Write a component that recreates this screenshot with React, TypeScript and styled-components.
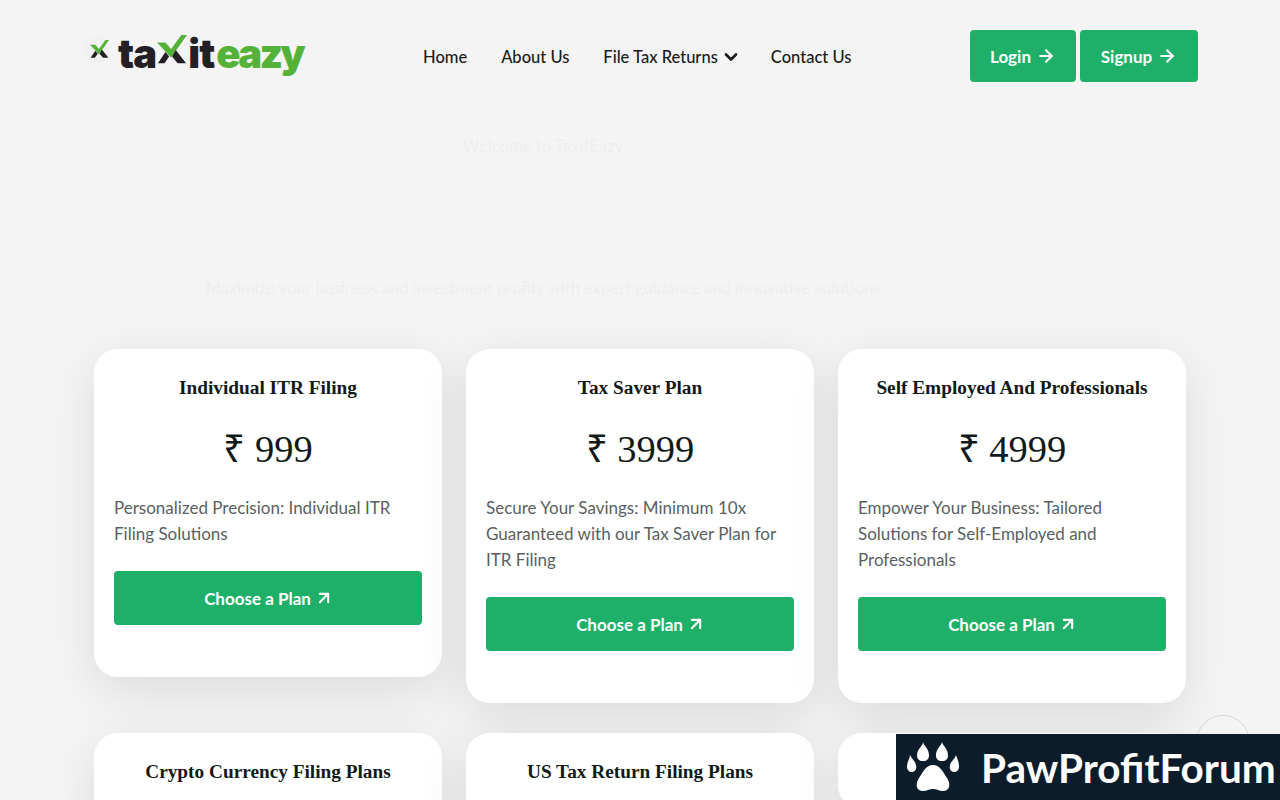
import React from 'react';
import styled, { createGlobalStyle } from 'styled-components';
import { ArrowRight, ArrowUpRight, ChevronDown } from 'lucide-react';

const GlobalStyle = createGlobalStyle`
  html, body {
    margin: 0;
    height: 100%;
    overflow: hidden;
    background: #f4f4f4;
  }
  * { box-sizing: border-box; }
`;

const Page = styled.div`
  height: 800px;
  overflow: hidden;
  font-family: 'Lato', 'Open Sans', sans-serif;
`;

const Header = styled.header`
  height: 112px;
  padding: 30px 82px 0 82px;
  display: flex;
  align-items: flex-start;
`;

const Logo = styled.a`
  width: 341px;
  height: 52px;
  padding-bottom: 5px;
  display: flex;
  align-items: center;
`;

const LogoBadge = styled.span`
  width: 27px;
  height: 27px;
  margin: 0 8px 9px 1px;
  padding-left: 5px;
  border-radius: 50%;
  background: #f0f0f0;
  display: flex;
  align-items: center;
  justify-content: center;
`;

const LogoText = styled.span`
  display: flex;
  align-items: center;
  font-family: 'Inter', 'Lato', sans-serif;
  font-weight: 900;
  font-size: 40px;
  letter-spacing: -0.9px;
  line-height: 46px;
  color: #231f25;
`;

const LogoMark = styled.span`
  display: flex;
  margin: 0 1px 7px;
`;

const LogoGreen = styled.span`
  margin-left: 2px;
  letter-spacing: -2.7px;
  color: #53b237;
`;

const Nav = styled.nav`
  width: 547px;
  height: 52px;
  display: flex;
  align-items: center;
  gap: 34px;
  padding-top: 2px;
`;

const NavLink = styled.a`
  display: flex;
  align-items: center;
  gap: 4px;
  font-size: 16.5px;
  font-weight: 500;
  color: #1a1a1a;
`;

const NavChevron = styled(ChevronDown)`
  margin: 0 -4px 0 -1px;
`;

const Actions = styled.div`
  display: flex;
  gap: 4px;
`;

const HeaderButton = styled.a<{ $width: number }>`
  width: ${(p) => p.$width}px;
  height: 52px;
  background: #1eb068;
  border-radius: 4px;
  color: #fff;
  font-size: 17px;
  font-weight: 700;
  display: flex;
  align-items: center;
  justify-content: center;
  gap: 5px;
`;

const Hero = styled.section`
  width: 1086px;
  height: 237px;
  text-align: center;
  color: #eeeeee;
`;

const HeroEyebrow = styled.div`
  font-size: 16.7px;
  line-height: 24px;
  padding-top: 22px;
  height: 164px;
`;

const HeroText = styled.div`
  font-size: 16.55px;
  line-height: 24px;
`;

const PlanGrid = styled.div`
  width: 1092px;
  margin-left: 94px;
  display: grid;
  grid-template-columns: repeat(3, 348px);
  column-gap: 24px;
  row-gap: 30px;
  align-items: start;
`;

const Card = styled.article`
  background: #fff;
  border-radius: 24px;
  padding: 24px 20px 52px;
  box-shadow: 0 14px 50px rgba(0, 0, 0, 0.1);
  text-align: center;
`;

const CardTitle = styled.h3`
  margin: 0;
  font-family: 'Liberation Serif', serif;
  font-size: 19.3px;
  line-height: 30px;
  font-weight: 700;
  color: #111a18;
`;

const Price = styled.div`
  margin-top: 21px;
  font-family: 'Liberation Serif', serif;
  font-size: 38.5px;
  line-height: 50px;
  color: #111a18;
`;

const Description = styled.p`
  margin: 21px 0 0;
  text-align: left;
  font-size: 17px;
  line-height: 26px;
  color: #5a5f63;
`;

const PlanButton = styled.a`
  margin-top: 24px;
  height: 54px;
  background: #1eb068;
  border-radius: 4px;
  color: #fff;
  font-size: 17px;
  font-weight: 700;
  display: flex;
  align-items: center;
  justify-content: center;
  gap: 3px;
`;

const PlanArrow = styled(ArrowUpRight)`
  margin-right: -2px;
`;

const ScrollTop = styled.div`
  position: fixed;
  left: 1196px;
  top: 715px;
  width: 54px;
  height: 54px;
  border-radius: 50%;
  border: 1px solid #d5d5d5;
`;

const Watermark = styled.div`
  position: fixed;
  left: 896px;
  top: 734px;
  width: 384px;
  height: 66px;
  background: #0d1c2b;
  display: flex;
  align-items: center;
  padding-left: 10px;
  gap: 21px;
`;

const WatermarkText = styled.span`
  font-family: 'Lato', sans-serif;
  font-weight: 700;
  font-size: 40.5px;
  color: #fff;
`;

const LogoX = ({ size }: { size: number }) => (
  <svg width={size} height={size} viewBox="0 0 32 32">
    <path d="M0 8 L9 8 L15 15 L26 0 L32 0 L15 24 Z" fill="#53b237" />
    <path d="M9 18 L13 23 L8 30 L1 30 Z" fill="#231f25" />
    <path d="M20 16 L31 30 L22 30 L16 23 Z" fill="#231f25" />
  </svg>
);

const PawIcon = () => (
  <svg width="54" height="52" viewBox="0 0 54 52" fill="#fff">
    <path d="M4 14 C4 17 1 21 1 25 C1 29 3 31 6 31 C9 31 11 28 10 24 C9 20 6 18 4 14 Z" />
    <path d="M17 1 C17 5 11 8 11 14 C11 18 13 20 17 20 C21 20 23 18 23 14 C23 8 18 5 17 1 Z" />
    <path d="M36 1 C35 5 30 8 30 14 C30 18 32 20 36 20 C40 20 42 18 42 14 C42 8 37 5 36 1 Z" />
    <path d="M50 14 C49 18 45 20 44 24 C43 28 45 31 48 31 C51 31 53 29 53 25 C53 21 51 17 50 14 Z" />
    <path d="M27 24 C34 24 37 31 41 37 C45 43 44 50 37 50 C33 50 31 48 27 48 C23 48 21 50 17 50 C10 50 9 43 13 37 C17 31 20 24 27 24 Z" />
  </svg>
);

const plans = [
  {
    title: 'Individual ITR Filing',
    price: '₹ 999',
    text: 'Personalized Precision: Individual ITR Filing Solutions',
  },
  {
    title: 'Tax Saver Plan',
    price: '₹ 3999',
    text: 'Secure Your Savings: Minimum 10x Guaranteed with our Tax Saver Plan for ITR Filing',
  },
  {
    title: 'Self Employed And Professionals',
    price: '₹ 4999',
    text: 'Empower Your Business: Tailored Solutions for Self-Employed and Professionals',
  },
];

const lowerPlans = ['Crypto Currency Filing Plans', 'US Tax Return Filing Plans', ''];

const App: React.FC = () => (
  <Page>
    <GlobalStyle />
    <Header>
      <Logo>
        <LogoBadge>
          <LogoX size={19} />
        </LogoBadge>
        <LogoText>
          ta
          <LogoMark>
            <LogoX size={30} />
          </LogoMark>
          it<LogoGreen>eazy</LogoGreen>
        </LogoText>
      </Logo>
      <Nav>
        <NavLink>Home</NavLink>
        <NavLink>About Us</NavLink>
        <NavLink>
          File Tax Returns <NavChevron size={20} strokeWidth={3.2} />
        </NavLink>
        <NavLink>Contact Us</NavLink>
      </Nav>
      <Actions>
        <HeaderButton $width={106}>
          Login <ArrowRight size={20} strokeWidth={2.5} />
        </HeaderButton>
        <HeaderButton $width={118}>
          Signup <ArrowRight size={20} strokeWidth={2.5} />
        </HeaderButton>
      </Actions>
    </Header>
    <Hero>
      <HeroEyebrow>Welcome to TaxitEazy</HeroEyebrow>
      <HeroText>Maximize your business and investment profits with expert guidance and innovative solutions</HeroText>
    </Hero>
    <PlanGrid>
      {plans.map((plan) => (
        <Card key={plan.title}>
          <CardTitle>{plan.title}</CardTitle>
          <Price>{plan.price}</Price>
          <Description>{plan.text}</Description>
          <PlanButton>
            Choose a Plan <PlanArrow size={20} strokeWidth={2.5} />
          </PlanButton>
        </Card>
      ))}
      {lowerPlans.map((title, i) => (
        <Card key={i}>
          <CardTitle>{title}</CardTitle>
        </Card>
      ))}
    </PlanGrid>
    <ScrollTop />
    <Watermark>
      <PawIcon />
      <WatermarkText>PawProfitForum</WatermarkText>
    </Watermark>
  </Page>
);

export default App;
